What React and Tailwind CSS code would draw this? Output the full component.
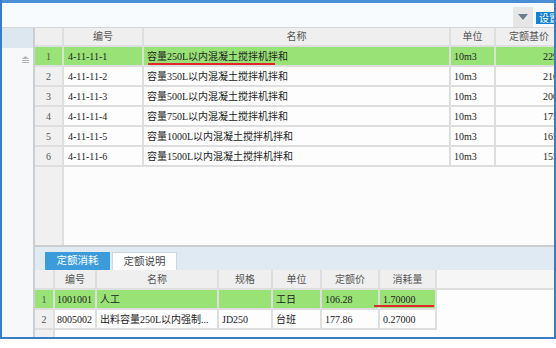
import React from 'react';

const topRows = [
  ['1', '4-11-11-1', '容量250L以内混凝土搅拌机拌和', '10m3', '2296.45'],
  ['2', '4-11-11-2', '容量350L以内混凝土搅拌机拌和', '10m3', '2106.32'],
  ['3', '4-11-11-3', '容量500L以内混凝土搅拌机拌和', '10m3', '2009.87'],
  ['4', '4-11-11-4', '容量750L以内混凝土搅拌机拌和', '10m3', '1759.21'],
  ['5', '4-11-11-5', '容量1000L以内混凝土搅拌机拌和', '10m3', '1658.04'],
  ['6', '4-11-11-6', '容量1500L以内混凝土搅拌机拌和', '10m3', '1559.37'],
];

const bottomRows = [
  ['1', '1001001', '人工', '', '工日', '106.28', '1.70000'],
  ['2', '8005002', '出料容量250L以内强制...', 'JD250', '台班', '177.86', '0.27000'],
];

const cell = 'h-full shrink-0 flex items-center overflow-hidden whitespace-nowrap border-r-2 border-b-2 border-[#dedede]';
const head = `${cell} justify-center bg-[#efefef] text-[#555] text-[10px]`;

const TopTable = () => (
  <div className="flex-1 flex flex-col min-h-0">
    <div className="flex h-[19px]">
      <div className={`${head} w-[29px]`}></div>
      <div className={`${head} w-[80px]`}>编号</div>
      <div className={`${head} w-[307px]`}>名称</div>
      <div className={`${head} w-[45px]`}>单位</div>
      <div className={`${cell} w-[86px] bg-[#efefef] text-[#555] text-[10px] pl-[13px]`}>定额基价</div>
    </div>
    {topRows.map((r, i) => {
      const bg = i === 0 ? 'bg-[#98e276]' : 'bg-[#fdfdfd]';
      return (
        <div key={r[0]} className="flex h-[20px] text-[#222] text-[10px]">
          <div className={`${cell} w-[29px] justify-center text-[#555] ${i === 0 ? 'bg-[#98e276]' : 'bg-[#f0f0f0]'}`}>{r[0]}</div>
          <div className={`${cell} w-[80px] pl-[4px] ${bg}`}>{r[1]}</div>
          <div className={`${cell} w-[307px] pl-[3px] ${bg} relative overflow-visible`}>
            {r[2]}
            {i === 0 && <div className="absolute left-[4px] bottom-[0px] w-[127px] h-[2px] bg-[#e3262b]"></div>}
          </div>
          <div className={`${cell} w-[45px] pl-[3px] ${bg}`}>{r[3]}</div>
          <div className={`${cell} w-[86px] pl-[47px] ${bg}`}>{r[4]}</div>
        </div>
      );
    })}
    <div className="flex-1 flex">
      <div className="w-[29px] bg-[#f0f0f0] border-r-2 border-[#dedede]"></div>
      <div className="flex-1 bg-[#fcfcfc]"></div>
    </div>
  </div>
);

const bw = ['w-[20px]', 'w-[42px]', 'w-[122px]', 'w-[54px]', 'w-[49px]', 'w-[58px]', 'w-[57px]'];

const BottomPanel = () => (
  <div className="h-[92px] shrink-0 flex flex-col border-t-2 border-[#cdcdcd]">
    <div className="h-[23px] bg-[#e0eaf2] flex items-end pl-[10px] gap-[2px]">
      <div className="w-[65px] h-[18px] bg-[#3c9bdb] text-white text-[10.5px] flex items-center justify-center">定额消耗</div>
      <div className="w-[65px] h-[18px] bg-white border border-b-0 border-[#cfd6dc] text-[#444] text-[10.5px] flex items-center justify-center">定额说明</div>
    </div>
    <div className="flex h-[20px]">
      {['', '编号', '名称', '规格', '单位', '定额价', '消耗量'].map((h, i) => (
        <div key={i} className={`${head} ${bw[i]}`}>{h}</div>
      ))}
      <div className="flex-1 bg-[#f6f6f6] border-b-2 border-[#dedede]"></div>
    </div>
    {bottomRows.map((r, i) => {
      const bg = i === 0 ? 'bg-[#98e276]' : 'bg-[#fdfdfd]';
      return (
        <div key={r[0]} className="flex h-[20px] text-[#222] text-[10px]">
          <div className={`${cell} ${bw[0]} justify-center text-[#555] ${i === 0 ? 'bg-[#98e276]' : 'bg-[#f0f0f0]'}`}>{r[0]}</div>
          {r.slice(1).map((v, j) => (
            <div key={j} className={`${cell} ${bw[j + 1]} ${j === 0 ? 'pl-[2px]' : 'pl-[3px]'} ${bg} ${j === 5 ? 'relative overflow-visible' : ''}`}>
              {v}
              {i === 0 && j === 5 && <div className="absolute left-[-6px] bottom-[1px] w-[60px] h-[2px] bg-[#e3262b]"></div>}
            </div>
          ))}
          <div className="flex-1 bg-[#fdfdfd]"></div>
        </div>
      );
    })}
    <div className="flex-1 flex">
      <div className="w-[20px] bg-[#f0f0f0] border-r-2 border-[#dedede]"></div>
      <div className="flex-1 bg-[#fdfdfd]"></div>
    </div>
  </div>
);

export default function App() {
  return (
    <div
      className="w-[556px] h-[348px] bg-white overflow-hidden"
      style={{ fontFamily: '"Liberation Serif", "Noto Sans CJK SC", sans-serif' }}
    >
      <div className="h-[339px] flex flex-col border-x-2 border-b-2 border-[#3b7dc4]">
        <div className="h-[3px] bg-[#4a8ed6] shrink-0"></div>
        <div className="h-[25px] shrink-0 bg-[#f7fbfe] border-b border-[#d6d6d6] flex items-start overflow-hidden">
          <div className="flex-1"></div>
          <div className="w-[20px] h-[20px] mt-[4px] bg-[#e6e6e6] flex items-center justify-center">
            <svg width="10" height="6" viewBox="0 0 10 6"><path d="M0 0h10L5 6z" fill="#6b7c8c" /></svg>
          </div>
          <div className="h-[12px] mt-[9px] ml-[3px] -mr-[8px] px-[3px] bg-[#1680d0] text-white text-[10px] leading-[12px]" style={{ fontFamily: '"Noto Sans CJK SC", sans-serif' }}>设置</div>
        </div>
        <div className="flex-1 flex min-h-0">
          <div className="w-[31px] shrink-0 flex flex-col">
            <div className="h-[20px] bg-[#dce7f0]"></div>
            <div className="flex-1 bg-[#f7f8fa] pt-[8px] pl-[20px]">
              <svg width="7" height="7" viewBox="0 0 7 7">
                <path d="M3.5 0L7 3H0z" fill="#b4b4b4" />
                <rect x="0" y="4" width="7" height="1" fill="#b4b4b4" />
                <rect x="0" y="6" width="7" height="1" fill="#b4b4b4" />
              </svg>
            </div>
          </div>
          <div className="w-[2px] shrink-0 bg-[#cbcfd3]"></div>
          <div className="flex-1 flex flex-col overflow-hidden min-w-0">
            <TopTable />
            <BottomPanel />
          </div>
        </div>
      </div>
    </div>
  );
}
